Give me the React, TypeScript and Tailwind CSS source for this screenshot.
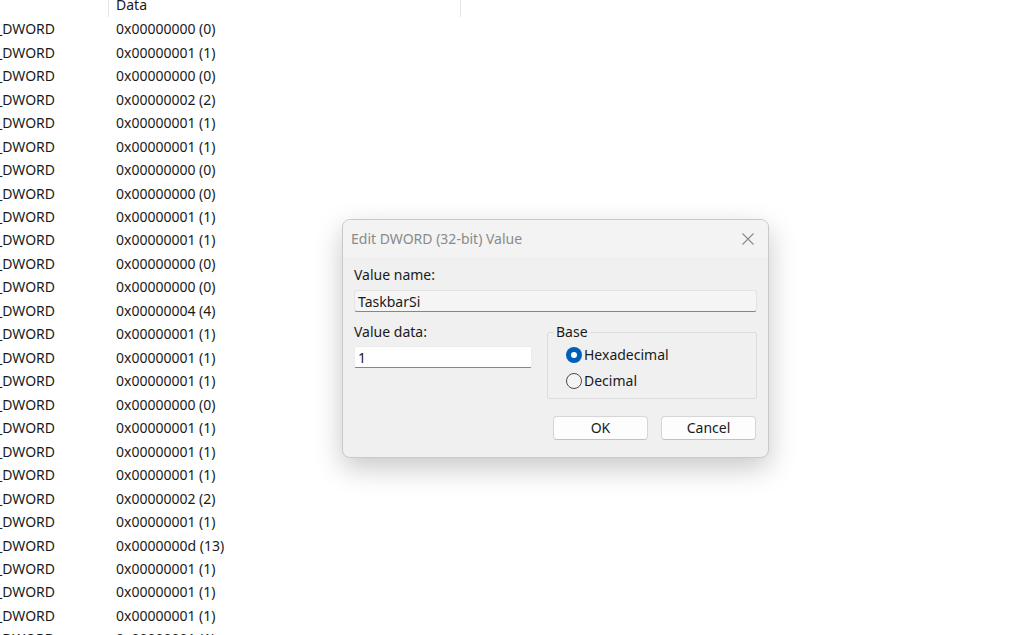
import React from "react";

const values = [
  "0x00000000 (0)",
  "0x00000001 (1)",
  "0x00000000 (0)",
  "0x00000002 (2)",
  "0x00000001 (1)",
  "0x00000001 (1)",
  "0x00000000 (0)",
  "0x00000000 (0)",
  "0x00000001 (1)",
  "0x00000001 (1)",
  "0x00000000 (0)",
  "0x00000000 (0)",
  "0x00000004 (4)",
  "0x00000001 (1)",
  "0x00000001 (1)",
  "0x00000001 (1)",
  "0x00000000 (0)",
  "0x00000001 (1)",
  "0x00000001 (1)",
  "0x00000001 (1)",
  "0x00000002 (2)",
  "0x00000001 (1)",
  "0x0000000d (13)",
  "0x00000001 (1)",
  "0x00000001 (1)",
  "0x00000001 (1)",
  "0x00000001 (1)",
];

const font = { fontFamily: '"Noto Sans", "Open Sans", sans-serif' };

function Radio({ checked, label }: { checked: boolean; label: string }) {
  return (
    <div className="flex items-center h-[20px] pl-[18px]">
      {checked ? (
        <span className="w-[16px] h-[16px] rounded-full bg-[#005fb8] flex items-center justify-center shrink-0">
          <span className="w-[6px] h-[6px] rounded-full bg-white" />
        </span>
      ) : (
        <span className="w-[16px] h-[16px] rounded-full border border-[#4a4a4a] bg-[#f4f4f4] shrink-0" />
      )}
      <span className="ml-[2px] text-[14px] leading-[20px] text-[#1a1a1a]">{label}</span>
    </div>
  );
}

export default function App() {
  return (
    <div className="relative w-[1024px] h-[635px] overflow-hidden bg-white" style={font}>
      <div className="flex h-[17px] text-[14px] text-[#1a1a1a]">
        <div className="w-[109px] shrink-0 border-r border-[#e5e5e5]" />
        <div className="w-[352px] shrink-0 border-r border-[#e5e5e5] pl-[7px] leading-[10px]">Data</div>
      </div>
      <div className="flex flex-col text-[14px] text-[#1a1a1a]">
        {values.map((v, i) => (
          <div key={i} className="flex h-[23.48px] items-center shrink-0">
            <div className="w-[108px] flex shrink-0">
              <div className="w-[55px] flex justify-end whitespace-nowrap">
                <span>REG_DWORD</span>
              </div>
            </div>
            <div className="pl-[8px]">{v}</div>
          </div>
        ))}
      </div>

      <div className="absolute left-[342px] top-[219px] w-[427px] h-[239px] rounded-[8px] border border-[#c9c9c9] bg-[#f0f0f0] shadow-[0_10px_28px_rgba(0,0,0,0.22)] flex flex-col overflow-hidden">
        <div className="h-[37px] bg-[#f3f3f3] flex items-center justify-between pl-[8px] pr-[14px] shrink-0">
          <span className="text-[14px] text-[#8a8a8a]">Edit DWORD (32-bit) Value</span>
          <svg width="12" height="12" viewBox="0 0 12 12" className="text-[#8a8a8a]">
            <path d="M0.5 0.5 L11.5 11.5 M11.5 0.5 L0.5 11.5" stroke="currentColor" strokeWidth="1.1" />
          </svg>
        </div>
        <div className="flex flex-col px-[11px] text-[14px] text-[#1a1a1a]">
          <div className="mt-[10px] leading-[16px]">Value name:</div>
          <div className="mt-[7px] h-[22px] bg-[#f5f5f5] border border-[#e3e3e3] border-b-[#868686] rounded-[3px] flex items-center pl-[3px]">
            TaskbarSi
          </div>
          <div className="mt-[12px] flex gap-[15px]">
            <div className="w-[178px] flex flex-col">
              <div className="leading-[16px]">Value data:</div>
              <div className="mt-[6px] h-[22px] bg-white border border-[#ececec] border-b-[#868686] rounded-[2px] flex items-center pl-[3px]">
                1
              </div>
            </div>
            <fieldset className="flex-1 h-[75px] border border-[#dcdcdc] rounded-[2px] pt-[5px]">
              <legend className="ml-[6px] px-[2px] leading-[16px]">Base</legend>
              <Radio checked label="Hexadecimal" />
              <div className="h-[6px]" />
              <Radio checked={false} label="Decimal" />
            </fieldset>
          </div>
          <div className="mt-[17px] flex justify-end gap-[13px] pr-[1px]">
            <button className="w-[95px] h-[24px] bg-[#fdfdfd] border border-[#d6d6d6] border-b-[#c2c2c2] rounded-[4px] text-[14px] text-[#1a1a1a] leading-[20px]">
              OK
            </button>
            <button className="w-[95px] h-[24px] bg-[#fdfdfd] border border-[#d6d6d6] border-b-[#c2c2c2] rounded-[4px] text-[14px] text-[#1a1a1a] leading-[20px]">
              Cancel
            </button>
          </div>
        </div>
      </div>
    </div>
  );
}
